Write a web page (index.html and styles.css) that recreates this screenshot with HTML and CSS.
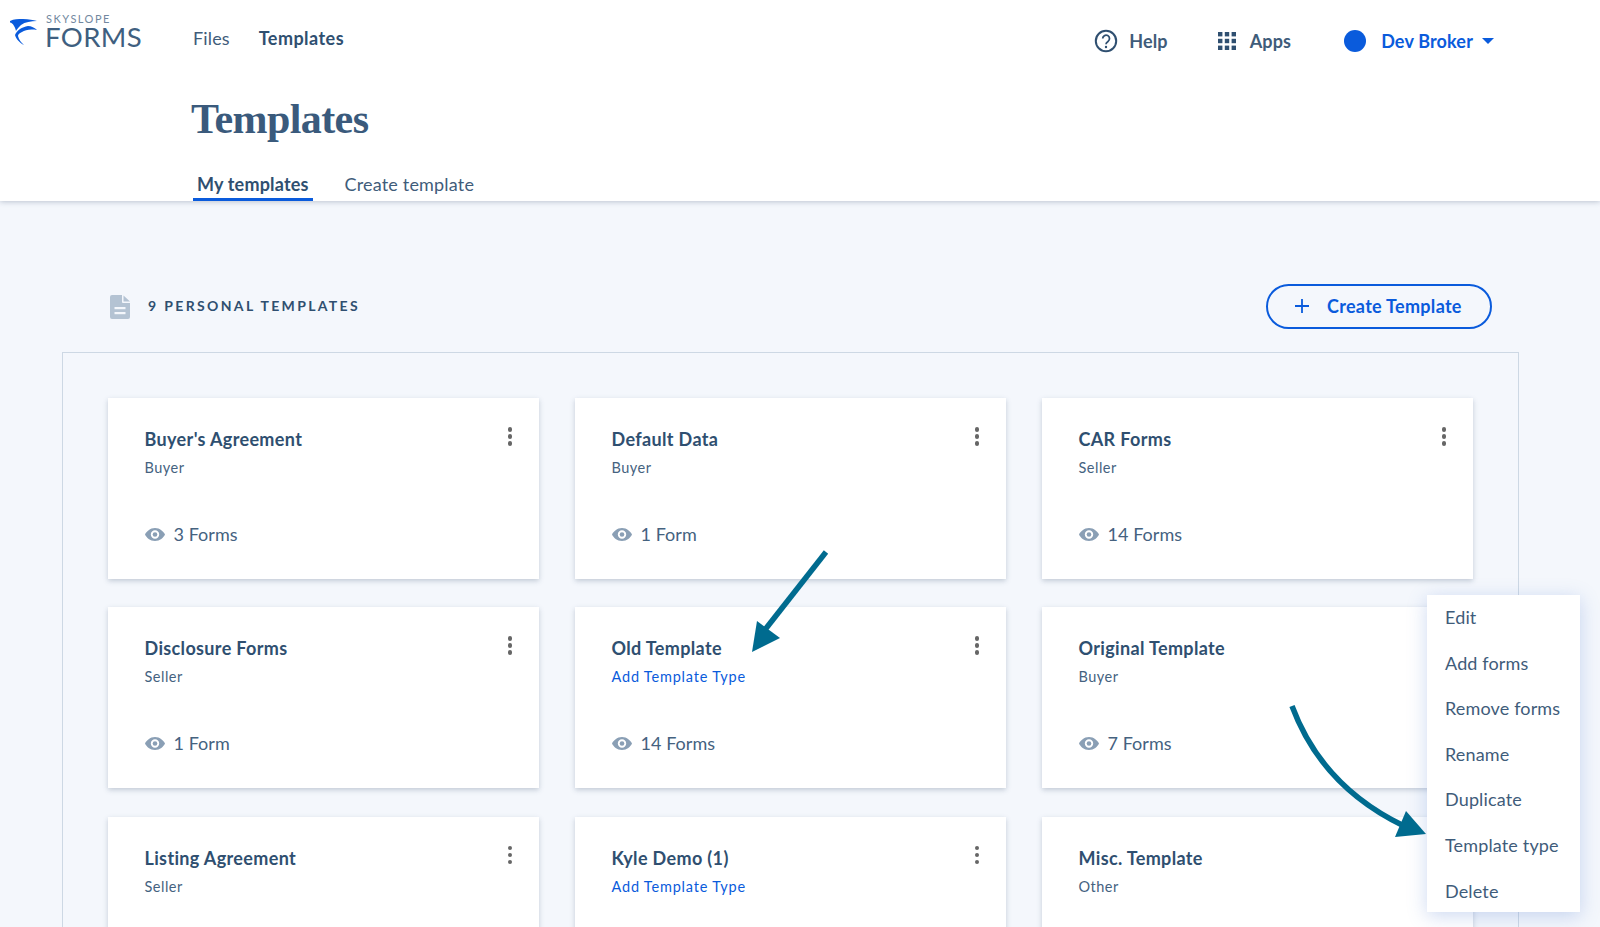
FILE: index.html
```html
<!DOCTYPE html>
<html lang="en">
<head>
<meta charset="utf-8">
<title>Templates</title>
<link rel="stylesheet" href="styles.css">
</head>
<body>
<header class="header">
  <div class="topbar">
    <div class="logo">
      <svg class="logo-mark" viewBox="0 0 27 29" width="27" height="29"><path d="M0 4C4 2 8 2 13 2C19 2 23 3 27 4C21 4 15 5 11 8C9 10 7 12 6 14C5 10 3 6 0 5.500Z" fill="#0a5bdc"/><path d="M27 13C20 12 15 13 12 15C9 16 8 18 8 19C9 23 11 25 14 28C10 26 6 22 5 18C7 13 12 10 18 9C21 9 25 11 27 13Z" fill="#0a5bdc"/></svg>
      <div class="logo-text"><span class="logo-sky">SKYSLOPE</span><span class="logo-forms">FORMS</span></div>
    </div>
    <nav class="nav"><a class="nav-link">Files</a><a class="nav-link nav-active">Templates</a></nav>
    <div class="top-actions">
      <div class="action action-help">
        <svg viewBox="0 0 24 24" width="24" height="24"><circle cx="12" cy="12" r="10.2" fill="none" stroke="#2f4f70" stroke-width="2"/><path d="M8.7 9.6a3.4 3.4 0 1 1 5.3 2.8c-1.3.9-2 1.4-2 2.8" fill="none" stroke="#2f4f70" stroke-width="1.8"/><circle cx="12" cy="18" r="1.2" fill="#2f4f70"/></svg>
        <span>Help</span>
      </div>
      <div class="action action-apps">
        <svg viewBox="0 0 18 18" width="18" height="18" fill="#2f4f70"><rect width="4.4" height="4.4"/><rect x="6.8" width="4.4" height="4.4"/><rect x="13.6" width="4.4" height="4.4"/><rect y="6.8" width="4.4" height="4.4"/><rect x="6.8" y="6.8" width="4.4" height="4.4"/><rect x="13.6" y="6.8" width="4.4" height="4.4"/><rect y="13.6" width="4.4" height="4.4"/><rect x="6.8" y="13.6" width="4.4" height="4.4"/><rect x="13.6" y="13.6" width="4.4" height="4.4"/></svg>
        <span>Apps</span>
      </div>
      <div class="action action-user">
        <span class="avatar"></span><span>Dev Broker</span><span class="caret"></span>
      </div>
    </div>
  </div>
  <h1 class="page-title">Templates</h1>
  <div class="tabs"><a class="tab tab-active">My templates</a><a class="tab">Create template</a></div>
</header>

<main class="main">
  <div class="section-head">
    <svg class="doc-icon" viewBox="0 0 20 24" width="20" height="24"><path d="M2 0H12V7a1 1 0 0 0 1 1H20V22a2 2 0 0 1-2 2H2a2 2 0 0 1-2-2V2a2 2 0 0 1 2-2ZM13.500 0.500L20 6.500H13.500Z" fill="#b4c3d3"/><rect x="4.500" y="12" width="11" height="2.200" fill="#f4f7fc"/><rect x="4.500" y="17" width="11" height="2.200" fill="#f4f7fc"/></svg>
    <span class="section-label">9 PERSONAL TEMPLATES</span>
    <button class="create-btn"><svg viewBox="0 0 14 14" width="14" height="14"><path d="M7 0V14M0 7H14" stroke="#0a5bdc" stroke-width="1.800" fill="none"/></svg><span>Create Template</span></button>
  </div>

  <section class="panel">
    <article class="card"><h2>Buyer's Agreement</h2><p class="type">Buyer</p><p class="forms"><svg class="eye" viewBox="0 0 20 13" width="20" height="13"><use href="#eye"/></svg>3 Forms</p><span class="dots"><i></i><i></i><i></i></span></article>
    <article class="card"><h2>Default Data</h2><p class="type">Buyer</p><p class="forms"><svg class="eye" viewBox="0 0 20 13" width="20" height="13"><use href="#eye"/></svg>1 Form</p><span class="dots"><i></i><i></i><i></i></span></article>
    <article class="card"><h2>CAR Forms</h2><p class="type">Seller</p><p class="forms"><svg class="eye" viewBox="0 0 20 13" width="20" height="13"><use href="#eye"/></svg>14 Forms</p><span class="dots"><i></i><i></i><i></i></span></article>
    <article class="card"><h2>Disclosure Forms</h2><p class="type">Seller</p><p class="forms"><svg class="eye" viewBox="0 0 20 13" width="20" height="13"><use href="#eye"/></svg>1 Form</p><span class="dots"><i></i><i></i><i></i></span></article>
    <article class="card"><h2>Old Template</h2><p class="type type-link">Add Template Type</p><p class="forms"><svg class="eye" viewBox="0 0 20 13" width="20" height="13"><use href="#eye"/></svg>14 Forms</p><span class="dots"><i></i><i></i><i></i></span></article>
    <article class="card"><h2>Original Template</h2><p class="type">Buyer</p><p class="forms"><svg class="eye" viewBox="0 0 20 13" width="20" height="13"><use href="#eye"/></svg>7 Forms</p></article>
    <article class="card"><h2>Listing Agreement</h2><p class="type">Seller</p><span class="dots"><i></i><i></i><i></i></span></article>
    <article class="card"><h2>Kyle Demo (1)</h2><p class="type type-link">Add Template Type</p><span class="dots"><i></i><i></i><i></i></span></article>
    <article class="card"><h2>Misc. Template</h2><p class="type">Other</p></article>
  </section>
</main>

<ul class="menu">
  <li>Edit</li><li>Add forms</li><li>Remove forms</li><li>Rename</li><li>Duplicate</li><li>Template type</li><li>Delete</li>
</ul>

<svg class="arrows" viewBox="0 0 1600 927" width="1600" height="927">
  <path d="M826 552L764 631" stroke="#006b8f" stroke-width="5.500" fill="none"/>
  <path d="M752 652L757 621L780 638Z" fill="#006b8f"/>
  <path d="M1292 706C1312 760 1350 800 1404 826" stroke="#006b8f" stroke-width="5.500" fill="none"/>
  <path d="M1426 834L1406 811L1395 837Z" fill="#006b8f"/>
</svg>

<svg class="defs" width="0" height="0"><defs><g id="eye"><path fill-rule="evenodd" d="M10 0C15 0 18.500 3.500 20 6.500C18.500 9.500 15 13 10 13S1.500 9.500 0 6.500C1.500 3.500 5 0 10 0ZM10 2.300A4.200 4.200 0 1 0 10 10.700A4.200 4.200 0 1 0 10 2.300Z" fill="#8a9fb5"/><circle cx="10" cy="6.500" r="2.300" fill="#8a9fb5"/></g></defs></svg>
</body>
</html>
```

FILE: styles.css
```css
* { box-sizing: border-box; }
html, body { margin: 0; padding: 0; }
body {
  width: 1600px;
  height: 927px;
  overflow: hidden;
  position: relative;
  background: #f4f7fc;
  color: #2f4f70;
  font-family: "Lato", "Liberation Sans", sans-serif;
}
.header {
  height: 201px;
  background: #fff;
  box-shadow: 0 1px 5px rgba(70, 90, 120, .32);
  position: relative;
  display: flex;
  flex-direction: column;
}
.topbar {
  height: 82px;
  display: flex;
  align-items: center;
  padding-left: 10px;
}
.logo { display: flex; align-items: flex-start; width: 183px; height: 82px; padding-top: 13px; }
.logo-mark { margin-top: 4px; margin-right: 9px; flex: none; }
.logo-text { display: flex; flex-direction: column; }
.logo-sky { font-size: 11px; letter-spacing: 1.500px; line-height: 11px; color: #7288a0; }
.logo-forms { font-size: 27.500px; line-height: 26px; letter-spacing: .4px; color: #3f5f80; margin-left: -1px; }
.nav { display: flex; gap: 29px; margin-top: -6px; }
.nav-link { font-size: 18px; letter-spacing: .15px; color: #3f5c7a; }
.nav-active { font-weight: 700; letter-spacing: .45px; color: #2f4f70; }
.top-actions { margin-left: auto; display: flex; align-items: center; font-size: 18px; letter-spacing: .15px; font-weight: 700; color: #3f5c7a; }
.action { display: flex; align-items: center; }
.action-help { gap: 11px; margin-right: 50px; }
.action-apps { gap: 14px; margin-right: 53px; }
.action-user { color: #0a5bdc; gap: 15px; margin-right: 106px; }
.avatar { width: 22px; height: 22px; border-radius: 50%; background: #0a5bdc; }
.caret { width: 0; height: 0; border: 6px solid transparent; border-top: 6px solid #0a5bdc; border-bottom: 0; margin-left: -6px; }
.page-title {
  margin: 13px 0 0 191px;
  font-family: "Liberation Serif", serif;
  font-size: 42px;
  line-height: 48px;
  letter-spacing: -.6px;
  font-weight: 700;
  color: #3a5a7c;
}
.tabs { margin: auto 0 0 193px; display: flex; gap: 28px; }
.tab { font-size: 18px; letter-spacing: .18px; padding: 1px 4px 3px; height: 29px; color: #3f5c7a; }
.tab-active { font-weight: 700; color: #2f4f70; border-bottom: 3px solid #0a5bdc; }
.main { padding: 83px 81px 0 62px; }
.section-head { display: flex; align-items: center; height: 45px; padding-left: 48px; }
.doc-icon { flex: none; }
.section-label { margin: -2px 0 0 18px; font-size: 14px; font-weight: 700; letter-spacing: 2.350px; color: #2f4f70; }
.create-btn {
  margin-left: auto;
  margin-right: 27px;
  width: 226px;
  height: 45px;
  display: flex;
  align-items: center;
  gap: 18px;
  padding: 0 0 2px 27px;
  background: transparent;
  border: 2px solid #0a5bdc;
  border-radius: 23px;
  color: #0a5bdc;
  font: 700 18px "Lato", "Liberation Sans", sans-serif;
  letter-spacing: .3px;
}
.panel {
  margin: 23px -24px 0 0;
  width: 1457px;
  border: 1px solid #cdd8e4;
  border-bottom: 0;
  padding: 45px 45px 0;
  display: grid;
  grid-template-columns: repeat(3, 431px);
  grid-auto-rows: 181px;
  column-gap: 36px;
  row-gap: 28.400px;
}
.card {
  position: relative;
  background: #fff;
  box-shadow: 0 2px 5px rgba(70, 90, 120, .28);
  padding: 29px 36.500px 0;
}
.card h2 { margin: 0; font-size: 18px; line-height: 24px; font-weight: 700; letter-spacing: .35px; color: #2f4f70; }
.type { margin: 7px 0 0; font-size: 14.500px; line-height: 20px; letter-spacing: .5px; color: #45627f; }
.type-link { color: #0a5bdc; letter-spacing: .8px; }
.forms { margin: 44px 0 0; display: flex; align-items: center; gap: 9px; font-size: 18px; line-height: 24px; letter-spacing: .05px; color: #45627f; }
.eye { flex: none; }
.dots { position: absolute; right: 27px; top: 29px; display: flex; flex-direction: column; gap: 2.500px; }
.dots i { display: block; width: 4.500px; height: 4.500px; border-radius: 50%; background: #666; }
.menu {
  position: absolute;
  left: 1427px;
  top: 595px;
  width: 153px;
  height: 317px;
  margin: 0;
  padding: 0 0 0 18px;
  list-style: none;
  background: #fff;
  box-shadow: 0 4px 18px rgba(90, 130, 210, .3);
  font-size: 18px;
  letter-spacing: .15px;
  color: #3f5c7a;
}
.menu li { height: 45.600px; line-height: 45.600px; white-space: nowrap; }
.arrows { position: absolute; left: 0; top: 0; pointer-events: none; }
.defs { position: absolute; }
```
